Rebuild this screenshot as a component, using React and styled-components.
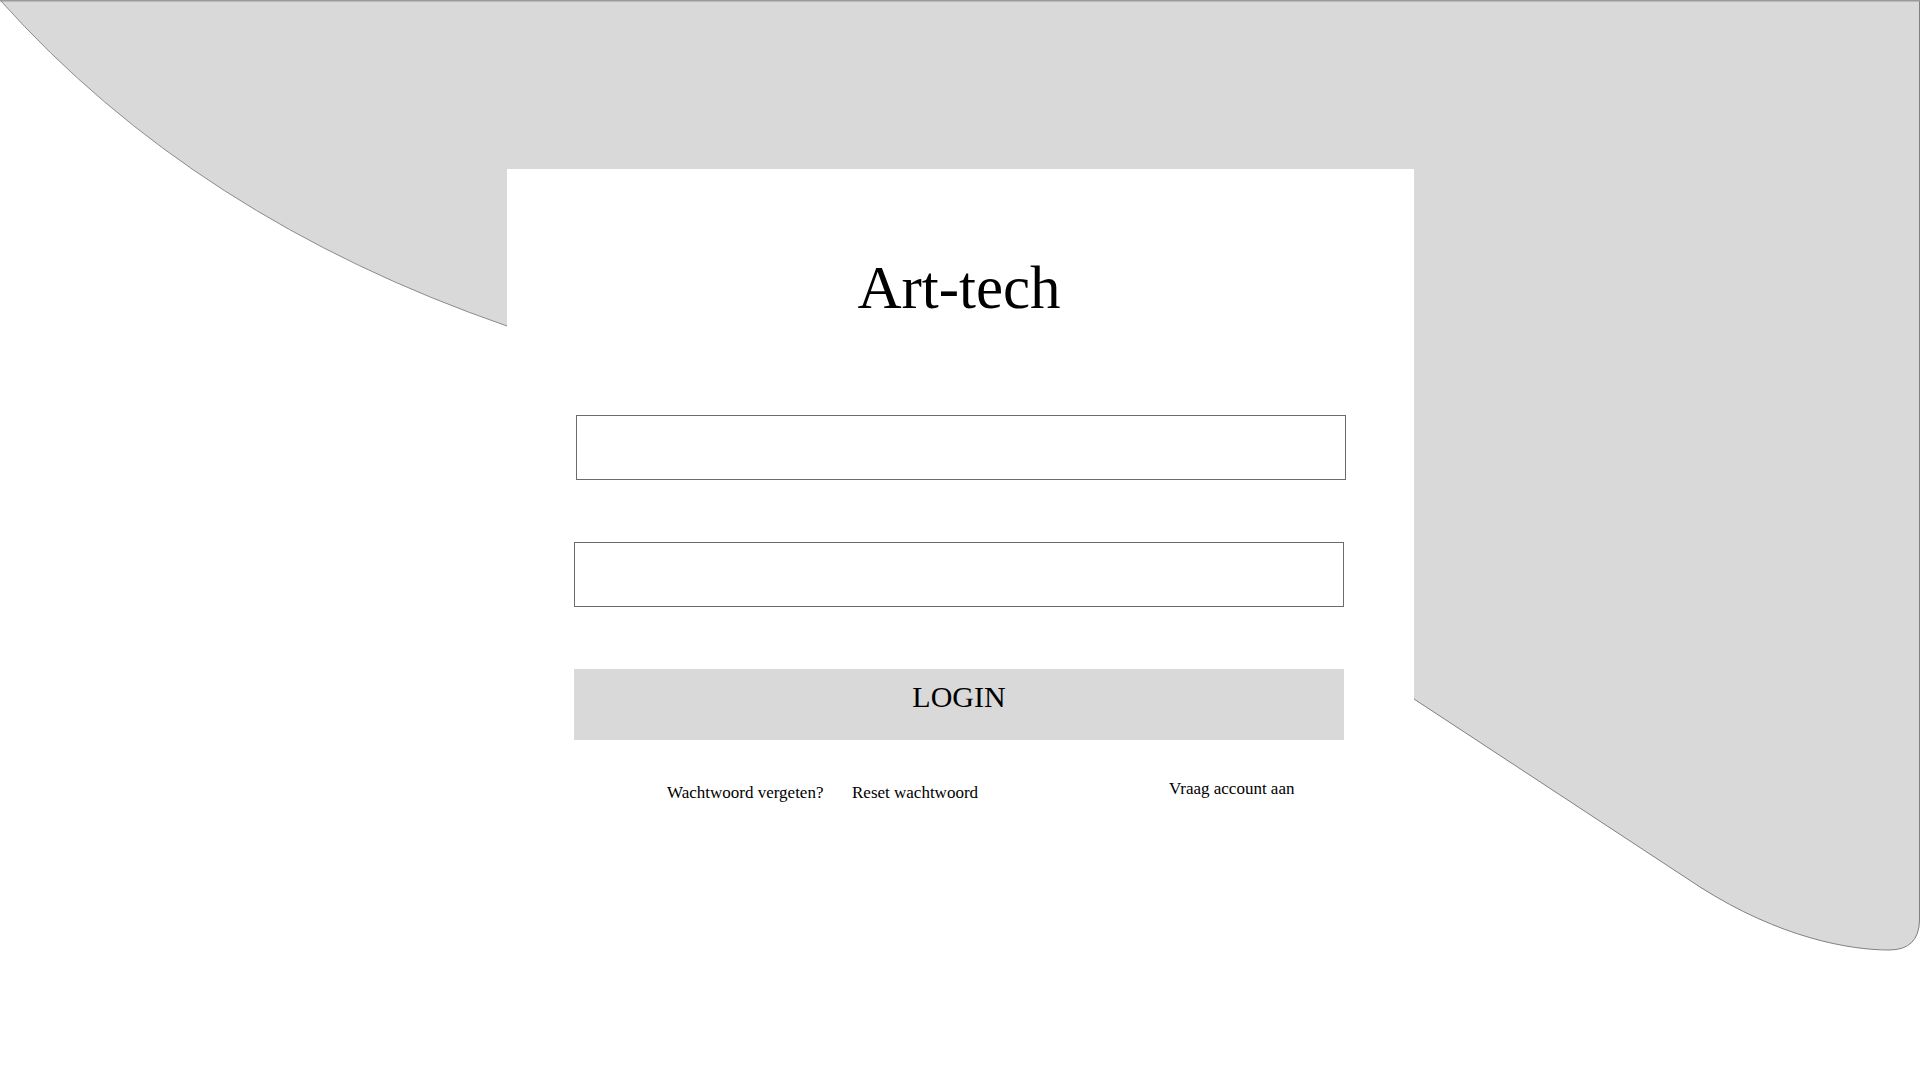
import React from 'react';
import styled, { createGlobalStyle } from 'styled-components';

const GlobalStyle = createGlobalStyle`
  html, body {
    margin: 0;
    padding: 0;
    background: #fff;
  }
  body {
    font-family: "Liberation Serif", "DejaVu Serif", serif;
    color: #000;
  }
`;

const Page = styled.div`
  position: relative;
  width: 1920px;
  height: 1080px;
  overflow: hidden;
  background: #fff;
`;

const Backdrop = styled.svg`
  position: absolute;
  top: 0;
  left: 0;
  width: 1920px;
  height: 1080px;
  z-index: 0;
`;

const Card = styled.div`
  position: relative;
  z-index: 1;
  display: flex;
  flex-direction: column;
  box-sizing: border-box;
  width: 907px;
  margin: 169px 0 0 507px;
  padding: 88px 70px 90px 67px;
  background: #fff;
`;

const Title = styled.h1`
  margin: 0;
  font-size: 61px;
  line-height: 61px;
  font-weight: 400;
  text-align: center;
`;

const Field = styled.input`
  display: block;
  box-sizing: border-box;
  width: 770px;
  height: 65px;
  margin: ${p => p.$top}px 0 0 ${p => p.$shift || 0}px;
  padding: 0 16px;
  border: 1px solid #6b6b6b;
  background: #fff;
  font-family: inherit;
  font-size: 22px;
  outline: none;
`;

const LoginButton = styled.button`
  display: block;
  box-sizing: border-box;
  width: 770px;
  height: 71px;
  margin-top: 62px;
  padding: 0 0 16px;
  border: none;
  background: #d9d9d9;
  color: #000;
  font-family: inherit;
  font-size: 30px;
  line-height: 30px;
  text-align: center;
  cursor: pointer;
`;

const LinkRow = styled.div`
  display: grid;
  grid-template-columns: 185px 317px 1fr;
  align-items: start;
  margin-top: 44px;
  padding-left: 93px;
`;

const TextLink = styled.a`
  color: #000;
  font-size: 17px;
  line-height: 17px;
  text-decoration: none;
  white-space: nowrap;
  margin-top: ${p => (p.$raised ? -4 : 0)}px;
  cursor: pointer;
`;

function Background() {
  return (
    <Backdrop viewBox="0 0 1920 1080">
      <path
        d="M0,0 L1920,0 L1920,920 Q1919,950 1889,950 C1850,950 1780,938 1700,887 L1414,699 L1300,699 L1300,400 L600,400 L507,326 Q195,218 0,0 Z"
        fill="#d9d9d9"
      />
      <path d="M0,0 Q195,218 507,326" fill="none" stroke="#8a8a8a" strokeWidth="1" />
      <path
        d="M1414,699 L1700,887 C1780,938 1850,950 1889,950 Q1919,950 1919.5,920 L1919.5,0"
        fill="none"
        stroke="#808080"
        strokeWidth="1"
      />
      <line x1="0" y1="0.75" x2="1920" y2="0.75" stroke="#9a9a9a" strokeWidth="1.5" />
    </Backdrop>
  );
}

export default function App() {
  return (
    <Page>
      <GlobalStyle />
      <Background />
      <Card>
        <Title>Art-tech</Title>
        <Field type="text" $top={97} $shift={2} />
        <Field type="password" $top={62} />
        <LoginButton>LOGIN</LoginButton>
        <LinkRow>
          <TextLink>Wachtwoord vergeten?</TextLink>
          <TextLink>Reset wachtwoord</TextLink>
          <TextLink $raised>Vraag account aan</TextLink>
        </LinkRow>
      </Card>
    </Page>
  );
}
